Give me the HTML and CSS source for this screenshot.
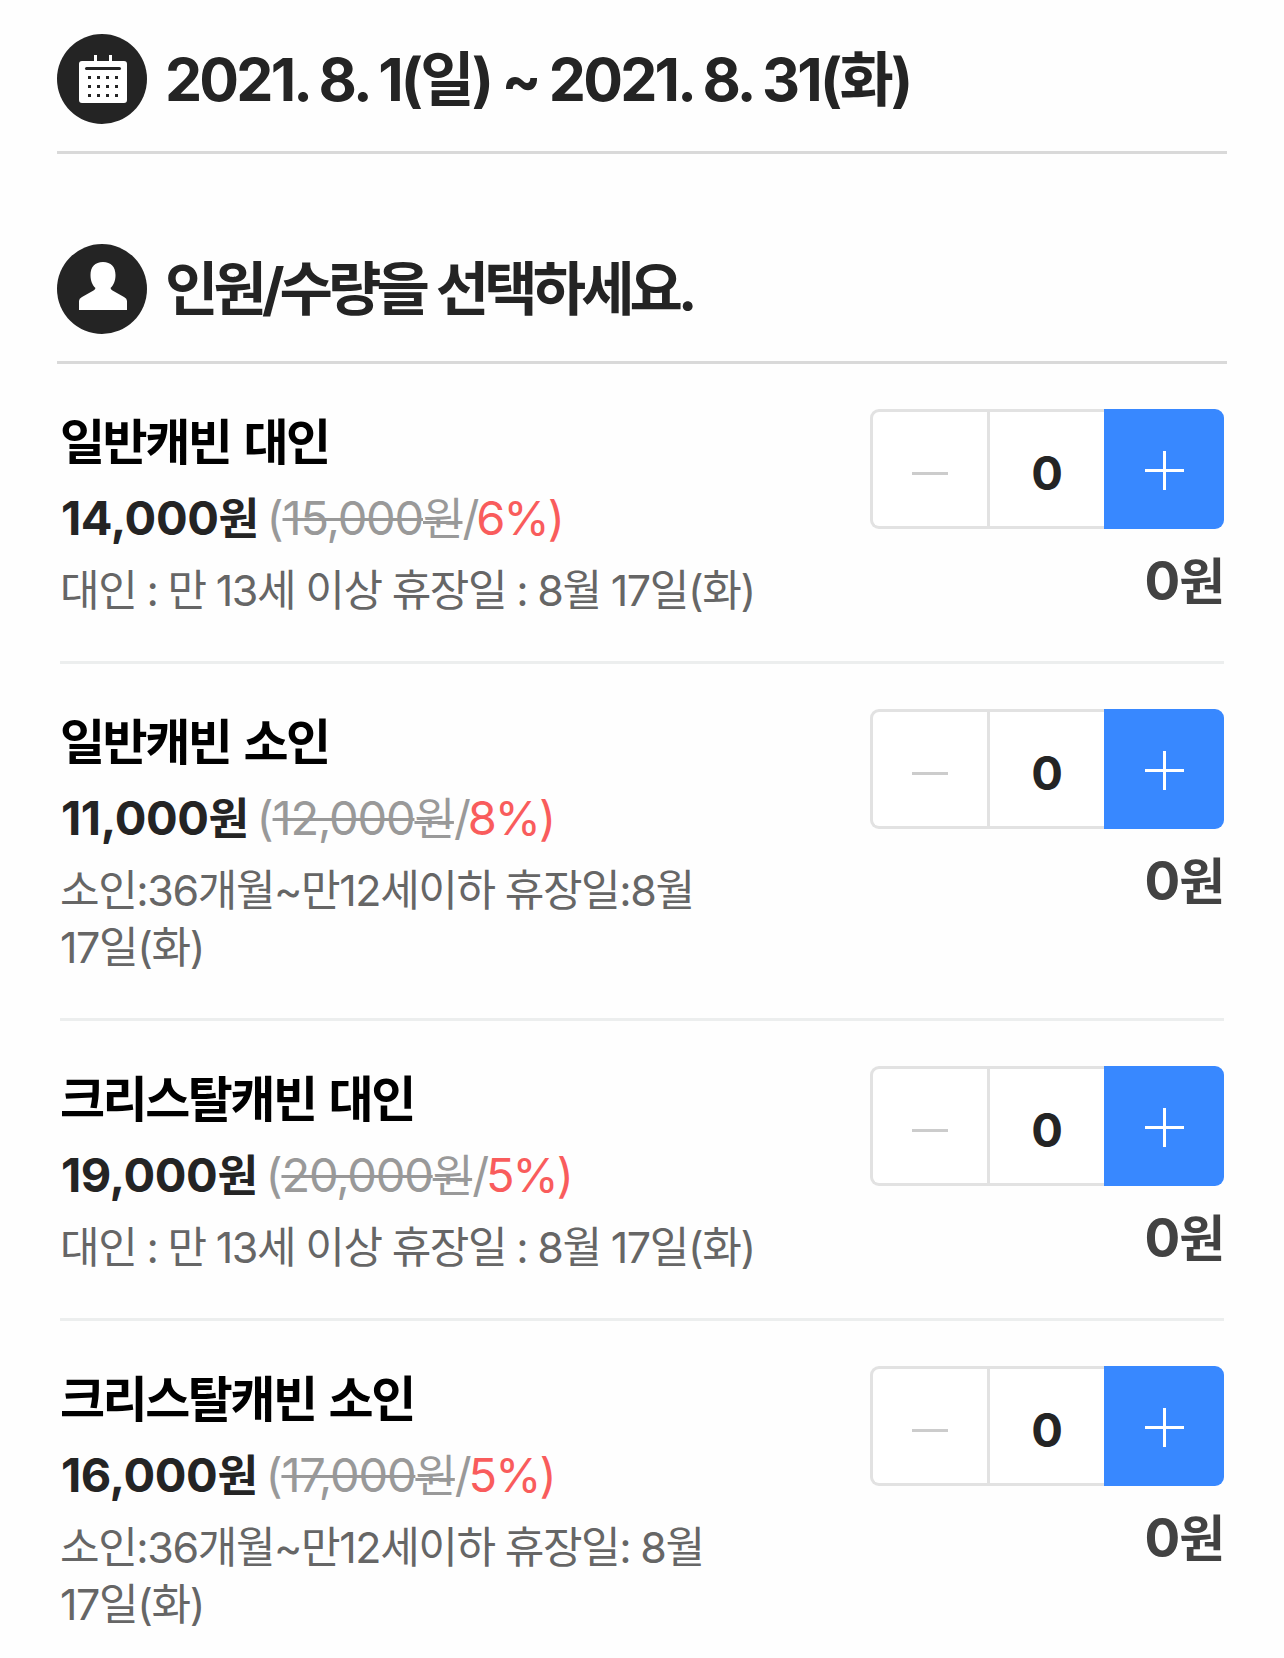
FILE: index.html
```html
<!DOCTYPE html>
<html lang="ko">
<head>
  <meta charset="UTF-8">
  <meta name="viewport" content="width=device-width, initial-scale=1.0">
  <title>인원/수량 선택</title>
  <link rel="stylesheet" href="styles.css">
</head>
<body>
  <main class="booking">
    <header class="section-head">
      <svg class="head-icon" viewBox="0 0 90 90">
        <circle cx="45" cy="45" r="45" fill="#242424"/>
        <path d="M37 21h3v6h12v-6h3v6h12a3 3 0 0 1 3 3v36a3 3 0 0 1-3 3H25a3 3 0 0 1-3-3V30a3 3 0 0 1 3-3h12z" fill="#fff"/>
        <path d="M29.500 34.500h33" stroke="#242424" stroke-width="3" stroke-linecap="round"/>
        <path d="M31 43.500h33M31 52.500h33M31 61.500h33" stroke="#242424" stroke-width="3" stroke-dasharray="3 6"/>
      </svg>
      <h2 class="date">2021. 8. 1(<span class="ko">일</span>) ~ 2021. 8. 31(<span class="ko">화</span>)</h2>
    </header>

    <header class="section-head">
      <svg class="head-icon" viewBox="0 0 90 90">
        <circle cx="45" cy="45" r="45" fill="#242424"/>
        <path d="M46 18c-8 0-12.500 5-12.500 13 0 6 2 10.500 5 13q-.5 1.500-2 2.500L25 53q-3 1.500-3 4v9h48v-9q0-2.500-3-4l-11.500-6.500q-1.500-1-2-2.500c3-2.500 5-7 5-13 0-8-4.500-13-12.500-13z" fill="#fff"/>
      </svg>
      <h2 class="guide">인원/수량을 선택하세요.</h2>
    </header>

    <ul class="tickets">
      <li class="ticket">
        <div class="info">
          <h3 class="name">일반캐빈 대인</h3>
          <p class="price"><strong>14,000<span class="ko">원</span></strong> <span class="origin">(<del>15,000<span class="ko">원</span></del>/</span><span class="rate">6%)</span></p>
          <p class="desc">대인 : 만 13세 이상 휴장일 : 8월 17일(화)</p>
        </div>
        <div class="count">
          <div class="stepper">
            <button class="minus" disabled><svg viewBox="0 0 36 3"><path d="M0 1.500h36"/></svg></button>
            <span class="num">0</span>
            <button class="plus"><svg viewBox="0 0 39 39"><path d="M0 19.500h39M19.500 0v39"/></svg></button>
          </div>
          <p class="total">0<span class="ko">원</span></p>
        </div>
      </li>
      <li class="ticket">
        <div class="info">
          <h3 class="name">일반캐빈 소인</h3>
          <p class="price"><strong>11,000<span class="ko">원</span></strong> <span class="origin">(<del>12,000<span class="ko">원</span></del>/</span><span class="rate">8%)</span></p>
          <p class="desc">소인:36개월~만12세이하 휴장일:8월<br>17일(화)</p>
        </div>
        <div class="count">
          <div class="stepper">
            <button class="minus" disabled><svg viewBox="0 0 36 3"><path d="M0 1.500h36"/></svg></button>
            <span class="num">0</span>
            <button class="plus"><svg viewBox="0 0 39 39"><path d="M0 19.500h39M19.500 0v39"/></svg></button>
          </div>
          <p class="total">0<span class="ko">원</span></p>
        </div>
      </li>
      <li class="ticket">
        <div class="info">
          <h3 class="name">크리스탈캐빈 대인</h3>
          <p class="price"><strong>19,000<span class="ko">원</span></strong> <span class="origin">(<del>20,000<span class="ko">원</span></del>/</span><span class="rate">5%)</span></p>
          <p class="desc">대인 : 만 13세 이상 휴장일 : 8월 17일(화)</p>
        </div>
        <div class="count">
          <div class="stepper">
            <button class="minus" disabled><svg viewBox="0 0 36 3"><path d="M0 1.500h36"/></svg></button>
            <span class="num">0</span>
            <button class="plus"><svg viewBox="0 0 39 39"><path d="M0 19.500h39M19.500 0v39"/></svg></button>
          </div>
          <p class="total">0<span class="ko">원</span></p>
        </div>
      </li>
      <li class="ticket">
        <div class="info">
          <h3 class="name">크리스탈캐빈 소인</h3>
          <p class="price"><strong>16,000<span class="ko">원</span></strong> <span class="origin">(<del>17,000<span class="ko">원</span></del>/</span><span class="rate">5%)</span></p>
          <p class="desc">소인:36개월~만12세이하 휴장일: 8월<br>17일(화)</p>
        </div>
        <div class="count">
          <div class="stepper">
            <button class="minus" disabled><svg viewBox="0 0 36 3"><path d="M0 1.500h36"/></svg></button>
            <span class="num">0</span>
            <button class="plus"><svg viewBox="0 0 39 39"><path d="M0 19.500h39M19.500 0v39"/></svg></button>
          </div>
          <p class="total">0<span class="ko">원</span></p>
        </div>
      </li>
    </ul>
  </main>
</body>
</html>
```
FILE: styles.css
```css
* {
  box-sizing: border-box;
  margin: 0;
  padding: 0;
}
body {
  font-family: Inter, 'Noto Sans CJK KR', sans-serif;
  background: #fefefe;
  color: #242424;
  height: 1658px;
  overflow: hidden;
}
.booking {
  padding: 34px 57px 0;
}
.section-head {
  display: flex;
  align-items: center;
  gap: 18px;
  height: 120px;
  padding-bottom: 27px;
  border-bottom: 3px solid #d9d9d9;
}
.section-head + .section-head {
  margin-top: 90px;
}
.head-icon {
  width: 90px;
  height: 90px;
  flex-shrink: 0;
}
.section-head h2 {
  font-size: 59px;
  line-height: 90px;
  font-weight: 700;
  white-space: nowrap;
}
.section-head .date {
  padding-top: 1px;
  letter-spacing: -2.8px;
  word-spacing: -1px;
}
.section-head .guide {
  font-size: 58px;
  letter-spacing: -4.9px;
  word-spacing: 2px;
}
.tickets {
  list-style: none;
  padding: 0 3px;
}
.ticket {
  display: flex;
  justify-content: space-between;
  padding: 45px 0 42px;
  border-bottom: 3px solid #eceeee;
}
.info {
  white-space: nowrap;
}
.name {
  padding-top: 1px;
  font-size: 49px;
  line-height: 66px;
  font-weight: 700;
  letter-spacing: -2.5px;
  word-spacing: 4px;
  color: #000;
}
.price {
  height: 72px;
  margin-top: 6px;
  padding-left: 1px;
  font-size: 47px;
  line-height: 72px;
  letter-spacing: -0.4px;
  word-spacing: -5px;
}
.price strong {
  font-weight: 700;
}
.price .ko,
.total .ko {
  font-size: 0.94em;
}
.origin {
  letter-spacing: -1.2px;
  color: #999;
}
.origin del {
  text-decoration-thickness: 3px;
}
.rate {
  margin-left: -2px;
  letter-spacing: -1.9px;
  color: #f95c5c;
}
.desc {
  margin-top: 8px;
  font-size: 43px;
  line-height: 57px;
  letter-spacing: -1.4px;
  word-spacing: -0.6px;
  color: #666;
}
.stepper {
  display: flex;
  width: 354px;
  height: 120px;
}
.stepper button {
  display: flex;
  align-items: center;
  justify-content: center;
  border: 0;
}
.stepper .minus {
  width: 117px;
  padding-top: 8px;
  background: #fff;
  border: 3px solid #e2e2e2;
  border-right: 0;
  border-radius: 9px 0 0 9px;
}
.stepper .plus {
  width: 120px;
  padding-top: 3px;
  background: #3888ff;
  border-radius: 0 9px 9px 0;
}
.stepper svg {
  fill: none;
  stroke-width: 3;
}
.minus svg {
  width: 36px;
  height: 3px;
  stroke: #ccc;
}
.plus svg {
  width: 39px;
  height: 39px;
  stroke: #fff;
}
.num {
  width: 117px;
  padding-top: 6px;
  background: #fff;
  border: 3px solid #e2e2e2;
  border-right: 0;
  font-size: 47px;
  line-height: 110px;
  font-weight: 700;
  text-align: center;
}
.total {
  padding-top: 12px;
  height: 90px;
  font-size: 53px;
  line-height: 80px;
  font-weight: 700;
  letter-spacing: -1px;
  text-align: right;
  color: #424242;
}
```
